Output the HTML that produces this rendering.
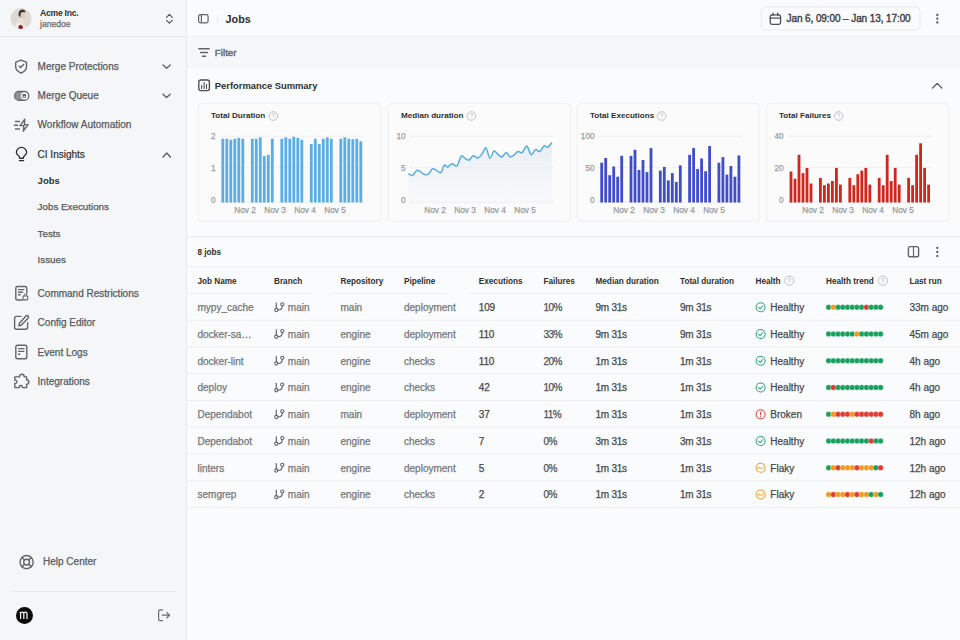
<!DOCTYPE html>
<html><head><meta charset="utf-8"><style>
html,body{margin:0;padding:0;width:960px;height:640px;overflow:hidden;background:#fafbfc;}
body{position:relative;font-family:"Liberation Sans", sans-serif;}
svg{position:absolute;left:0;top:0;}
.t{position:absolute;white-space:nowrap;line-height:1;-webkit-text-stroke:0.25px currentColor;}
</style></head><body>
<svg width="960" height="640" viewBox="0 0 960 640">
<rect x="0" y="0" width="186" height="640" fill="#f5f6f8"/>
<rect x="186" y="0" width="774" height="640" fill="#fafbfc"/>
<rect x="186" y="36" width="774" height="32" fill="#f6f7f9"/>
<line x1="186" y1="36.5" x2="960" y2="36.5" stroke="#f0f1f3" stroke-width="1"/>
<line x1="186" y1="67.5" x2="960" y2="67.5" stroke="#f1f2f4" stroke-width="1"/>
<line x1="186.5" y1="0" x2="186.5" y2="640" stroke="#e7e9ec" stroke-width="1"/>
<line x1="0" y1="36.5" x2="185" y2="36.5" stroke="#e7e9ec" stroke-width="1"/>
<defs><clipPath id="avc"><circle cx="21" cy="18.6" r="10.5"/></clipPath></defs>
<g clip-path="url(#avc)"><rect x="10" y="8" width="22" height="22" fill="#dddad5"/><path d="M16 30 L16.5 24 Q17 20 19.5 18.5 L23 18.8 Q24.5 22 24 30 Z" fill="#ebe0d8"/><path d="M14 30 Q14.5 25 17.5 22 L19.5 24 L18 30 Z" fill="#f1eee9"/><path d="M23.5 30 L23.8 24 L26 26 L26 30 Z" fill="#eeeae5"/><ellipse cx="22.6" cy="15.2" rx="2.5" ry="3.4" fill="#e3c9bb"/><path d="M18.6 15.5 Q18 10.5 21.8 9.6 Q25.6 9.4 25.4 12.6 Q23.5 11.3 21 12.6 Q20.3 14.5 20.4 17.5 Z" fill="#3e302c"/><circle cx="20.6" cy="27.3" r="2.2" fill="#9d1519"/></g>
<path d="M166.5 17.3 L169.4 14.4 L172.3 17.3 M166.5 20.3 L169.4 23.2 L172.3 20.3" fill="none" stroke="#555" stroke-width="1.15" stroke-linecap="round" stroke-linejoin="round"/>
<path d="M21.1 60.1 L26.5 62.2 V66.8 Q26.5 70.8 21.1 73 Q15.7 70.8 15.7 66.8 V62.2 Z" fill="none" stroke="#636569" stroke-width="1.4" stroke-linecap="round" stroke-linejoin="round"/>
<path d="M19.1 66.2 L20.6 67.6 L23.6 64.6" fill="none" stroke="#636569" stroke-width="1.4" stroke-linecap="round" stroke-linejoin="round"/>
<path d="M163 64.9 L166.6 68.3 L170.2 64.9" fill="none" stroke="#636569" stroke-width="1.4" stroke-linecap="round" stroke-linejoin="round"/>
<path d="M163 94.2 L166.6 97.6 L170.2 94.2" fill="none" stroke="#636569" stroke-width="1.4" stroke-linecap="round" stroke-linejoin="round"/>
<path d="M163 157 L166.7 153 L170.4 157" fill="none" stroke="#555" stroke-width="1.2" stroke-linecap="round" stroke-linejoin="round"/>
<rect x="14.5" y="91.4" width="14.4" height="9" rx="4.5" fill="#8e9093" stroke="#636569" stroke-width="1.1"/>
<circle cx="24.4" cy="95.9" r="3.55" fill="#fbfbfc"/>
<rect x="22.5" y="94.1" width="3.4" height="3.6" fill="#5c5e61"/>
<rect x="23.4" y="96" width="1.6" height="1" fill="#d9dadc"/>
<path d="M24.8 119.2 L20 125.6 H23.9 L23.3 131.2 L28.1 124.6 H24.3 L24.8 119.2 Z" fill="none" stroke="#636569" stroke-width="1.4" stroke-linecap="round" stroke-linejoin="round"/>
<path d="M15.6 121.5 H19.4 M14.4 125.3 H17.6 M15.4 129 H19.4" fill="none" stroke="#636569" stroke-width="1.4" stroke-linecap="round" stroke-linejoin="round"/>
<path d="M19.7 158.2 Q19.7 156.8 18.3 155.6 Q16.4 154 16.4 152.5 A5.1 5.1 0 0 1 26.6 152.5 Q26.6 154 24.7 155.6 Q23.3 156.8 23.3 158.2 Z M19.4 160.6 H23.6" fill="none" stroke="#2a2c2f" stroke-width="1.35" stroke-linecap="round" stroke-linejoin="round"/>
<path d="M22.5 300 H17.6 Q15.8 300 15.8 298.2 V288.2 Q15.8 286.5 17.6 286.5 H25 Q26.8 286.5 26.8 288.2 V293.2" fill="none" stroke="#636569" stroke-width="1.4" stroke-linecap="round" stroke-linejoin="round"/>
<path d="M18.5 289.6 H24 M18.5 292.2 H22.6 M18.5 294.8 H20.2" fill="none" stroke="#636569" stroke-width="1.4" stroke-linecap="round" stroke-linejoin="round"/>
<rect x="23" y="296" width="4.8" height="3.9" rx="0.9" fill="#f5f6f8" stroke="#636569" stroke-width="1.1"/>
<path d="M24.1 296 V295.2 A1.3 1.3 0 0 1 26.7 295.2 V296" fill="none" stroke="#636569" stroke-width="1"/>
<path d="M21 316.4 H16.6 Q14.6 316.4 14.6 318.4 V327.3 Q14.6 329.3 16.6 329.3 H25.6 Q27.6 329.3 27.6 327.3 V322.8" fill="none" stroke="#636569" stroke-width="1.4" stroke-linecap="round" stroke-linejoin="round"/>
<path d="M26.2 315.8 Q27.7 315 28.4 316.4 Q28.8 317.6 28 318.3 L21.2 325.2 L18.9 325.7 L19.4 323.3 Z" fill="none" stroke="#636569" stroke-width="1.4" stroke-linecap="round" stroke-linejoin="round"/>
<rect x="15.8" y="345.3" width="11" height="13.4" rx="1.8" fill="none" stroke="#636569" stroke-width="1.4" stroke-linecap="round" stroke-linejoin="round"/>
<path d="M18.6 348.6 H24 M18.6 351.4 H23.8 M18.6 354.2 H19.8" fill="none" stroke="#636569" stroke-width="1.4" stroke-linecap="round" stroke-linejoin="round"/>
<path d="M19.5 376.9 Q19.6 374.2 22 374.3 Q24.3 374.5 24.2 376.9 H26.6 V379.7 Q28.8 379.8 28.8 382 Q28.8 384.2 26.6 384.2 V387.6 H22.4 Q22.6 385.6 20.9 385.5 Q19 385.5 19.2 387.6 H14.8 V383.4 Q16.9 383.5 16.9 381.8 Q16.9 380 14.8 380.1 V376.9 Z" fill="none" stroke="#636569" stroke-width="1.4" stroke-linecap="round" stroke-linejoin="round"/>
<circle cx="26.6" cy="562.1" r="6.6" fill="none" stroke="#636569" stroke-width="1.4" stroke-linecap="round" stroke-linejoin="round"/>
<circle cx="26.6" cy="562.1" r="2.9" fill="none" stroke="#636569" stroke-width="1.4" stroke-linecap="round" stroke-linejoin="round"/>
<path d="M22 557.5 L24.5 560 M31.2 557.5 L28.7 560 M22 566.7 L24.5 564.2 M31.2 566.7 L28.7 564.2" fill="none" stroke="#636569" stroke-width="1.4" stroke-linecap="round" stroke-linejoin="round"/>
<line x1="12" y1="591.5" x2="176" y2="591.5" stroke="#e7e9ec" stroke-width="1"/>
<circle cx="24.5" cy="615.5" r="8.5" fill="#0b0b0b"/>
<path d="M20.6 619 V613.6 Q20.6 612.2 22.2 612.2 Q23.8 612.2 23.8 613.6 V619 M23.8 613.6 Q23.8 612.2 25.4 612.2 Q27 612.2 27 613.6 V619" fill="none" stroke="#fff" stroke-width="1.2"/>
<path d="M19.5 612.3 H20.6" stroke="#fff" stroke-width="1"/>
<path d="M162.5 609.9 H160 Q158.6 609.9 158.6 611.3 V619.3 Q158.6 620.7 160 620.7 H162.5 M162.2 615.2 H169.4 M166.8 612.6 L169.5 615.2 L166.8 617.8" fill="none" stroke="#6a6c70" stroke-width="1.2" stroke-linecap="round" stroke-linejoin="round"/>
<rect x="198.6" y="14.6" width="9.5" height="8.2" rx="1.8" fill="none" stroke="#636569" stroke-width="1.25"/>
<line x1="201.4" y1="14.8" x2="201.4" y2="22.6" stroke="#636569" stroke-width="1.2"/>
<line x1="217.5" y1="15.5" x2="217.5" y2="23.5" stroke="#e6e8eb" stroke-width="1"/>
<rect x="761.5" y="7" width="158.5" height="23" rx="4.5" fill="#fafbfc" stroke="#e7e9ec" stroke-width="1"/>
<rect x="770.2" y="14.9" width="10.4" height="9.4" rx="1.8" fill="none" stroke="#4e5054" stroke-width="1.3"/>
<path d="M770.2 18.1 H780.6 M773 13.2 V15.6 M777.8 13.2 V15.6" fill="none" stroke="#4e5054" stroke-width="1.3" stroke-linecap="round"/>
<circle cx="937.3" cy="14.9" r="1.15" fill="#555"/>
<circle cx="937.3" cy="18.7" r="1.15" fill="#555"/>
<circle cx="937.3" cy="22.5" r="1.15" fill="#555"/>
<path d="M198.8 48.8 H209.2 M200.6 52.5 H207.4 M202.4 56.2 H205.6" fill="none" stroke="#636569" stroke-width="1.4" stroke-linecap="round" stroke-linejoin="round"/>
<rect x="198.8" y="80" width="10.6" height="10.6" rx="2" fill="none" stroke="#4a4c50" stroke-width="1.35"/>
<path d="M201.7 88.4 V85.4 M204.1 88.4 V82.6 M206.5 88.4 V84.4" fill="none" stroke="#4a4c50" stroke-width="1.1" stroke-linecap="round"/>
<path d="M932.6 88 L937.2 83.4 L941.8 88" fill="none" stroke="#555" stroke-width="1.2" stroke-linecap="round" stroke-linejoin="round"/>
<line x1="186" y1="236.6" x2="960" y2="236.6" stroke="#e7e9ec" stroke-width="1"/>
<rect x="198.2" y="103.4" width="182.6" height="117.9" rx="4" fill="#fbfbfc" stroke="#eef0f2" stroke-width="1"/>
<rect x="388.2" y="103.4" width="182.6" height="117.9" rx="4" fill="#fbfbfc" stroke="#eef0f2" stroke-width="1"/>
<rect x="577.2" y="103.4" width="182.6" height="117.9" rx="4" fill="#fbfbfc" stroke="#eef0f2" stroke-width="1"/>
<rect x="766.2" y="103.4" width="182.6" height="117.9" rx="4" fill="#fbfbfc" stroke="#eef0f2" stroke-width="1"/>
<circle cx="273.3" cy="116" r="4.3" fill="none" stroke="#b8bbbf" stroke-width="0.9"/>
<path d="M272.0 114.9 Q272.0 113.5 273.3 113.5 Q274.7 113.5 274.7 114.8 Q274.7 115.7 273.3 116.3 V116.9" fill="none" stroke="#b8bbbf" stroke-width="0.8"/>
<circle cx="273.3" cy="118.1" r="0.45" fill="#b8bbbf"/>
<circle cx="471.5" cy="116" r="4.3" fill="none" stroke="#b8bbbf" stroke-width="0.9"/>
<path d="M470.2 114.9 Q470.2 113.5 471.5 113.5 Q472.9 113.5 472.9 114.8 Q472.9 115.7 471.5 116.3 V116.9" fill="none" stroke="#b8bbbf" stroke-width="0.8"/>
<circle cx="471.5" cy="118.1" r="0.45" fill="#b8bbbf"/>
<circle cx="661.6" cy="116" r="4.3" fill="none" stroke="#b8bbbf" stroke-width="0.9"/>
<path d="M660.3000000000001 114.9 Q660.3000000000001 113.5 661.6 113.5 Q663.0 113.5 663.0 114.8 Q663.0 115.7 661.6 116.3 V116.9" fill="none" stroke="#b8bbbf" stroke-width="0.8"/>
<circle cx="661.6" cy="118.1" r="0.45" fill="#b8bbbf"/>
<circle cx="838.6" cy="116" r="4.3" fill="none" stroke="#b8bbbf" stroke-width="0.9"/>
<path d="M837.3000000000001 114.9 Q837.3000000000001 113.5 838.6 113.5 Q840.0 113.5 840.0 114.8 Q840.0 115.7 838.6 116.3 V116.9" fill="none" stroke="#b8bbbf" stroke-width="0.8"/>
<circle cx="838.6" cy="118.1" r="0.45" fill="#b8bbbf"/>
<line x1="219" y1="136.3" x2="364" y2="136.3" stroke="#eef0f2" stroke-width="1"/>
<line x1="219" y1="167.6" x2="364" y2="167.6" stroke="#eef0f2" stroke-width="1"/>
<line x1="219" y1="202.3" x2="364" y2="202.3" stroke="#eef0f2" stroke-width="1"/>
<line x1="409" y1="136.3" x2="554" y2="136.3" stroke="#eef0f2" stroke-width="1"/>
<line x1="409" y1="167.6" x2="554" y2="167.6" stroke="#eef0f2" stroke-width="1"/>
<line x1="409" y1="202.3" x2="554" y2="202.3" stroke="#eef0f2" stroke-width="1"/>
<line x1="598" y1="136.3" x2="743" y2="136.3" stroke="#eef0f2" stroke-width="1"/>
<line x1="598" y1="167.6" x2="743" y2="167.6" stroke="#eef0f2" stroke-width="1"/>
<line x1="598" y1="202.3" x2="743" y2="202.3" stroke="#eef0f2" stroke-width="1"/>
<line x1="787" y1="136.3" x2="932" y2="136.3" stroke="#eef0f2" stroke-width="1"/>
<line x1="787" y1="167.6" x2="932" y2="167.6" stroke="#eef0f2" stroke-width="1"/>
<line x1="787" y1="202.3" x2="932" y2="202.3" stroke="#eef0f2" stroke-width="1"/>
<rect x="221.40" y="138.75" width="2.8" height="63.75" fill="#5aaee6"/>
<rect x="225.40" y="138.75" width="2.8" height="63.75" fill="#5aaee6"/>
<rect x="229.40" y="139.80" width="2.8" height="62.70" fill="#5aaee6"/>
<rect x="233.40" y="138.75" width="2.8" height="63.75" fill="#5aaee6"/>
<rect x="237.40" y="137.90" width="2.8" height="64.60" fill="#5aaee6"/>
<rect x="241.40" y="138.75" width="2.8" height="63.75" fill="#5aaee6"/>
<rect x="250.90" y="138.75" width="2.8" height="63.75" fill="#5aaee6"/>
<rect x="254.90" y="138.75" width="2.8" height="63.75" fill="#5aaee6"/>
<rect x="258.90" y="137.30" width="2.8" height="65.20" fill="#5aaee6"/>
<rect x="262.90" y="156.00" width="2.8" height="46.50" fill="#5aaee6"/>
<rect x="266.90" y="154.80" width="2.8" height="47.70" fill="#5aaee6"/>
<rect x="270.90" y="138.75" width="2.8" height="63.75" fill="#5aaee6"/>
<rect x="280.40" y="138.75" width="2.8" height="63.75" fill="#5aaee6"/>
<rect x="284.40" y="137.30" width="2.8" height="65.20" fill="#5aaee6"/>
<rect x="288.40" y="138.75" width="2.8" height="63.75" fill="#5aaee6"/>
<rect x="292.40" y="136.70" width="2.8" height="65.80" fill="#5aaee6"/>
<rect x="296.40" y="137.90" width="2.8" height="64.60" fill="#5aaee6"/>
<rect x="300.40" y="139.80" width="2.8" height="62.70" fill="#5aaee6"/>
<rect x="309.90" y="144.00" width="2.8" height="58.50" fill="#5aaee6"/>
<rect x="313.90" y="138.75" width="2.8" height="63.75" fill="#5aaee6"/>
<rect x="317.90" y="144.00" width="2.8" height="58.50" fill="#5aaee6"/>
<rect x="321.90" y="138.75" width="2.8" height="63.75" fill="#5aaee6"/>
<rect x="325.90" y="137.30" width="2.8" height="65.20" fill="#5aaee6"/>
<rect x="329.90" y="138.75" width="2.8" height="63.75" fill="#5aaee6"/>
<rect x="339.40" y="138.75" width="2.8" height="63.75" fill="#5aaee6"/>
<rect x="343.40" y="137.30" width="2.8" height="65.20" fill="#5aaee6"/>
<rect x="347.40" y="138.75" width="2.8" height="63.75" fill="#5aaee6"/>
<rect x="351.40" y="139.20" width="2.8" height="63.30" fill="#5aaee6"/>
<rect x="355.40" y="138.75" width="2.8" height="63.75" fill="#5aaee6"/>
<rect x="359.40" y="141.25" width="2.8" height="61.25" fill="#5aaee6"/>
<rect x="600.30" y="162.70" width="2.8" height="39.80" fill="#3f4ec6"/>
<rect x="604.30" y="157.90" width="2.8" height="44.60" fill="#3f4ec6"/>
<rect x="608.30" y="175.20" width="2.8" height="27.30" fill="#3f4ec6"/>
<rect x="612.30" y="166.50" width="2.8" height="36.00" fill="#3f4ec6"/>
<rect x="616.30" y="176.70" width="2.8" height="25.80" fill="#3f4ec6"/>
<rect x="620.30" y="155.80" width="2.8" height="46.70" fill="#3f4ec6"/>
<rect x="629.60" y="155.80" width="2.8" height="46.70" fill="#3f4ec6"/>
<rect x="633.60" y="149.80" width="2.8" height="52.70" fill="#3f4ec6"/>
<rect x="637.60" y="170.00" width="2.8" height="32.50" fill="#3f4ec6"/>
<rect x="641.60" y="160.00" width="2.8" height="42.50" fill="#3f4ec6"/>
<rect x="645.60" y="172.10" width="2.8" height="30.40" fill="#3f4ec6"/>
<rect x="649.60" y="148.10" width="2.8" height="54.40" fill="#3f4ec6"/>
<rect x="658.90" y="170.60" width="2.8" height="31.90" fill="#3f4ec6"/>
<rect x="662.90" y="166.90" width="2.8" height="35.60" fill="#3f4ec6"/>
<rect x="666.90" y="180.40" width="2.8" height="22.10" fill="#3f4ec6"/>
<rect x="670.90" y="173.10" width="2.8" height="29.40" fill="#3f4ec6"/>
<rect x="674.90" y="181.90" width="2.8" height="20.60" fill="#3f4ec6"/>
<rect x="678.90" y="165.40" width="2.8" height="37.10" fill="#3f4ec6"/>
<rect x="688.20" y="154.80" width="2.8" height="47.70" fill="#3f4ec6"/>
<rect x="692.20" y="148.10" width="2.8" height="54.40" fill="#3f4ec6"/>
<rect x="696.20" y="169.00" width="2.8" height="33.50" fill="#3f4ec6"/>
<rect x="700.20" y="158.50" width="2.8" height="44.00" fill="#3f4ec6"/>
<rect x="704.20" y="171.25" width="2.8" height="31.25" fill="#3f4ec6"/>
<rect x="708.20" y="146.00" width="2.8" height="56.50" fill="#3f4ec6"/>
<rect x="717.50" y="162.70" width="2.8" height="39.80" fill="#3f4ec6"/>
<rect x="721.50" y="157.10" width="2.8" height="45.40" fill="#3f4ec6"/>
<rect x="725.50" y="174.60" width="2.8" height="27.90" fill="#3f4ec6"/>
<rect x="729.50" y="166.00" width="2.8" height="36.50" fill="#3f4ec6"/>
<rect x="733.50" y="176.70" width="2.8" height="25.80" fill="#3f4ec6"/>
<rect x="737.50" y="155.40" width="2.8" height="47.10" fill="#3f4ec6"/>
<rect x="789.60" y="171.50" width="2.8" height="31.00" fill="#d1261c"/>
<rect x="793.60" y="178.75" width="2.8" height="23.75" fill="#d1261c"/>
<rect x="797.60" y="154.80" width="2.8" height="47.70" fill="#d1261c"/>
<rect x="801.60" y="173.10" width="2.8" height="29.40" fill="#d1261c"/>
<rect x="805.60" y="167.90" width="2.8" height="34.60" fill="#d1261c"/>
<rect x="809.60" y="183.50" width="2.8" height="19.00" fill="#d1261c"/>
<rect x="819.00" y="177.90" width="2.8" height="24.60" fill="#d1261c"/>
<rect x="823.00" y="185.20" width="2.8" height="17.30" fill="#d1261c"/>
<rect x="827.00" y="183.50" width="2.8" height="19.00" fill="#d1261c"/>
<rect x="831.00" y="181.00" width="2.8" height="21.50" fill="#d1261c"/>
<rect x="835.00" y="167.90" width="2.8" height="34.60" fill="#d1261c"/>
<rect x="839.00" y="184.60" width="2.8" height="17.90" fill="#d1261c"/>
<rect x="848.40" y="177.90" width="2.8" height="24.60" fill="#d1261c"/>
<rect x="852.40" y="185.20" width="2.8" height="17.30" fill="#d1261c"/>
<rect x="856.40" y="174.20" width="2.8" height="28.30" fill="#d1261c"/>
<rect x="860.40" y="170.60" width="2.8" height="31.90" fill="#d1261c"/>
<rect x="864.40" y="167.90" width="2.8" height="34.60" fill="#d1261c"/>
<rect x="868.40" y="184.60" width="2.8" height="17.90" fill="#d1261c"/>
<rect x="877.80" y="177.90" width="2.8" height="24.60" fill="#d1261c"/>
<rect x="881.80" y="185.20" width="2.8" height="17.30" fill="#d1261c"/>
<rect x="885.80" y="154.80" width="2.8" height="47.70" fill="#d1261c"/>
<rect x="889.80" y="181.00" width="2.8" height="21.50" fill="#d1261c"/>
<rect x="893.80" y="167.90" width="2.8" height="34.60" fill="#d1261c"/>
<rect x="897.80" y="184.60" width="2.8" height="17.90" fill="#d1261c"/>
<rect x="907.20" y="177.90" width="2.8" height="24.60" fill="#d1261c"/>
<rect x="911.20" y="185.20" width="2.8" height="17.30" fill="#d1261c"/>
<rect x="915.20" y="154.80" width="2.8" height="47.70" fill="#d1261c"/>
<rect x="919.20" y="143.30" width="2.8" height="59.20" fill="#d1261c"/>
<rect x="923.20" y="167.90" width="2.8" height="34.60" fill="#d1261c"/>
<rect x="927.20" y="184.60" width="2.8" height="17.90" fill="#d1261c"/>
<defs><linearGradient id="ag" x1="0" y1="0" x2="0" y2="1"><stop offset="0" stop-color="#e2e9f2" stop-opacity="0.75"/><stop offset="1" stop-color="#f1f4f8" stop-opacity="0.35"/></linearGradient></defs>
<path d="M408.4 173.6 C409.10 173.90 411.20 175.93 412.6 175.4 C414.00 174.87 415.40 170.93 416.8 170.4 C418.20 169.87 419.70 171.50 421 172.2 C422.30 172.90 423.30 174.37 424.6 174.6 C425.90 174.83 427.52 174.55 428.8 173.6 C430.08 172.65 431.02 169.43 432.3 168.9 C433.58 168.37 435.08 169.78 436.5 170.4 C437.92 171.02 439.50 173.48 440.8 172.6 C442.10 171.72 443.13 166.03 444.3 165.1 C445.47 164.17 446.52 167.23 447.8 167 C449.08 166.77 450.47 163.90 452 163.7 C453.53 163.50 455.47 167.08 457 165.8 C458.53 164.52 459.92 157.28 461.2 156 C462.48 154.72 463.40 157.40 464.7 158.1 C466.00 158.80 467.58 160.60 469 160.2 C470.42 159.80 471.73 156.05 473.2 155.7 C474.67 155.35 476.33 158.40 477.8 158.1 C479.27 157.80 480.63 155.62 482 153.9 C483.37 152.18 484.70 147.10 486 147.8 C487.30 148.50 488.47 157.57 489.8 158.1 C491.13 158.63 492.72 151.70 494 151 C495.28 150.30 496.20 152.88 497.5 153.9 C498.80 154.92 500.33 157.33 501.8 157.1 C503.27 156.87 504.90 152.50 506.3 152.5 C507.70 152.50 508.85 156.75 510.2 157.1 C511.55 157.45 513.10 155.53 514.4 154.6 C515.70 153.67 516.70 151.85 518 151.5 C519.30 151.15 520.73 153.40 522.2 152.5 C523.67 151.60 525.33 145.75 526.8 146.1 C528.27 146.45 529.53 154.02 531 154.6 C532.47 155.18 534.13 150.12 535.6 149.6 C537.07 149.08 538.40 152.13 539.8 151.5 C541.20 150.87 542.72 146.50 544 145.8 C545.28 145.10 546.20 147.83 547.5 147.3 C548.80 146.77 551.08 143.38 551.8 142.6 L551.8 202.3 L408.4 202.3 Z" fill="url(#ag)"/>
<path d="M408.4 173.6 C409.10 173.90 411.20 175.93 412.6 175.4 C414.00 174.87 415.40 170.93 416.8 170.4 C418.20 169.87 419.70 171.50 421 172.2 C422.30 172.90 423.30 174.37 424.6 174.6 C425.90 174.83 427.52 174.55 428.8 173.6 C430.08 172.65 431.02 169.43 432.3 168.9 C433.58 168.37 435.08 169.78 436.5 170.4 C437.92 171.02 439.50 173.48 440.8 172.6 C442.10 171.72 443.13 166.03 444.3 165.1 C445.47 164.17 446.52 167.23 447.8 167 C449.08 166.77 450.47 163.90 452 163.7 C453.53 163.50 455.47 167.08 457 165.8 C458.53 164.52 459.92 157.28 461.2 156 C462.48 154.72 463.40 157.40 464.7 158.1 C466.00 158.80 467.58 160.60 469 160.2 C470.42 159.80 471.73 156.05 473.2 155.7 C474.67 155.35 476.33 158.40 477.8 158.1 C479.27 157.80 480.63 155.62 482 153.9 C483.37 152.18 484.70 147.10 486 147.8 C487.30 148.50 488.47 157.57 489.8 158.1 C491.13 158.63 492.72 151.70 494 151 C495.28 150.30 496.20 152.88 497.5 153.9 C498.80 154.92 500.33 157.33 501.8 157.1 C503.27 156.87 504.90 152.50 506.3 152.5 C507.70 152.50 508.85 156.75 510.2 157.1 C511.55 157.45 513.10 155.53 514.4 154.6 C515.70 153.67 516.70 151.85 518 151.5 C519.30 151.15 520.73 153.40 522.2 152.5 C523.67 151.60 525.33 145.75 526.8 146.1 C528.27 146.45 529.53 154.02 531 154.6 C532.47 155.18 534.13 150.12 535.6 149.6 C537.07 149.08 538.40 152.13 539.8 151.5 C541.20 150.87 542.72 146.50 544 145.8 C545.28 145.10 546.20 147.83 547.5 147.3 C548.80 146.77 551.08 143.38 551.8 142.6" fill="none" stroke="#55ade2" stroke-width="1.5"/>
<line x1="186" y1="266.5" x2="960" y2="266.5" stroke="#eef0f2" stroke-width="1"/>
<rect x="908.4" y="246.6" width="10.2" height="10.2" rx="1.8" fill="none" stroke="#636569" stroke-width="1.4" stroke-linecap="round" stroke-linejoin="round"/>
<line x1="913.5" y1="246.8" x2="913.5" y2="256.6" stroke="#636569" stroke-width="1.2"/>
<circle cx="937.3" cy="247.9" r="1.15" fill="#555"/>
<circle cx="937.3" cy="252" r="1.15" fill="#555"/>
<circle cx="937.3" cy="256.1" r="1.15" fill="#555"/>
<circle cx="789.3" cy="280.6" r="4.6" fill="none" stroke="#b8bbbf" stroke-width="0.9"/>
<path d="M788.0 279.5 Q788.0 278.1 789.3 278.1 Q790.6999999999999 278.1 790.6999999999999 279.40000000000003 Q790.6999999999999 280.3 789.3 280.90000000000003 V281.5" fill="none" stroke="#b8bbbf" stroke-width="0.8"/>
<circle cx="789.3" cy="282.70000000000005" r="0.45" fill="#b8bbbf"/>
<circle cx="882.9" cy="280.6" r="4.6" fill="none" stroke="#b8bbbf" stroke-width="0.9"/>
<path d="M881.6 279.5 Q881.6 278.1 882.9 278.1 Q884.3 278.1 884.3 279.40000000000003 Q884.3 280.3 882.9 280.90000000000003 V281.5" fill="none" stroke="#b8bbbf" stroke-width="0.8"/>
<circle cx="882.9" cy="282.70000000000005" r="0.45" fill="#b8bbbf"/>
<line x1="186" y1="293.5" x2="312.5" y2="293.5" stroke="#eceef1" stroke-width="1"/>
<line x1="331.3" y1="293.5" x2="447" y2="293.5" stroke="#eceef1" stroke-width="1"/>
<line x1="467.7" y1="293.5" x2="960" y2="293.5" stroke="#eceef1" stroke-width="1"/>
<path d="M276.3 303.0 V308.40000000000003" fill="none" stroke="#636569" stroke-width="1.2" stroke-linecap="round"/>
<circle cx="276.3" cy="310.0" r="1.6" fill="none" stroke="#636569" stroke-width="1.1"/>
<circle cx="282.3" cy="304.3" r="1.6" fill="none" stroke="#636569" stroke-width="1.1"/>
<path d="M282.3 305.90000000000003 Q282.3 309.90000000000003 277.90000000000003 309.90000000000003" fill="none" stroke="#636569" stroke-width="1.1"/>
<circle cx="760.6" cy="307.3" r="4.5" fill="none" stroke="#3aa57a" stroke-width="1.1"/>
<path d="M758.6 307.40000000000003 L760.1 308.8 L762.7 306.0" fill="none" stroke="#3aa57a" stroke-width="1.1" stroke-linecap="round" stroke-linejoin="round"/>
<circle cx="828.60" cy="307.30" r="2.75" fill="#17a05d" stroke="#fafbfc" stroke-width="0.3"/>
<circle cx="833.33" cy="307.30" r="2.75" fill="#f29a1f" stroke="#fafbfc" stroke-width="0.3"/>
<circle cx="838.06" cy="307.30" r="2.75" fill="#17a05d" stroke="#fafbfc" stroke-width="0.3"/>
<circle cx="842.79" cy="307.30" r="2.75" fill="#17a05d" stroke="#fafbfc" stroke-width="0.3"/>
<circle cx="847.52" cy="307.30" r="2.75" fill="#17a05d" stroke="#fafbfc" stroke-width="0.3"/>
<circle cx="852.25" cy="307.30" r="2.75" fill="#17a05d" stroke="#fafbfc" stroke-width="0.3"/>
<circle cx="856.98" cy="307.30" r="2.75" fill="#17a05d" stroke="#fafbfc" stroke-width="0.3"/>
<circle cx="861.71" cy="307.30" r="2.75" fill="#17a05d" stroke="#fafbfc" stroke-width="0.3"/>
<circle cx="866.44" cy="307.30" r="2.75" fill="#df3b32" stroke="#fafbfc" stroke-width="0.3"/>
<circle cx="871.17" cy="307.30" r="2.75" fill="#17a05d" stroke="#fafbfc" stroke-width="0.3"/>
<circle cx="875.90" cy="307.30" r="2.75" fill="#17a05d" stroke="#fafbfc" stroke-width="0.3"/>
<circle cx="880.63" cy="307.30" r="2.75" fill="#17a05d" stroke="#fafbfc" stroke-width="0.3"/>
<line x1="186" y1="320.25" x2="960" y2="320.25" stroke="#eceef1" stroke-width="1"/>
<path d="M276.3 329.75 V335.15000000000003" fill="none" stroke="#636569" stroke-width="1.2" stroke-linecap="round"/>
<circle cx="276.3" cy="336.75" r="1.6" fill="none" stroke="#636569" stroke-width="1.1"/>
<circle cx="282.3" cy="331.05" r="1.6" fill="none" stroke="#636569" stroke-width="1.1"/>
<path d="M282.3 332.65000000000003 Q282.3 336.65000000000003 277.90000000000003 336.65000000000003" fill="none" stroke="#636569" stroke-width="1.1"/>
<circle cx="760.6" cy="334.05" r="4.5" fill="none" stroke="#3aa57a" stroke-width="1.1"/>
<path d="M758.6 334.15000000000003 L760.1 335.55 L762.7 332.75" fill="none" stroke="#3aa57a" stroke-width="1.1" stroke-linecap="round" stroke-linejoin="round"/>
<circle cx="828.60" cy="334.05" r="2.75" fill="#17a05d" stroke="#fafbfc" stroke-width="0.3"/>
<circle cx="833.33" cy="334.05" r="2.75" fill="#17a05d" stroke="#fafbfc" stroke-width="0.3"/>
<circle cx="838.06" cy="334.05" r="2.75" fill="#17a05d" stroke="#fafbfc" stroke-width="0.3"/>
<circle cx="842.79" cy="334.05" r="2.75" fill="#17a05d" stroke="#fafbfc" stroke-width="0.3"/>
<circle cx="847.52" cy="334.05" r="2.75" fill="#17a05d" stroke="#fafbfc" stroke-width="0.3"/>
<circle cx="852.25" cy="334.05" r="2.75" fill="#17a05d" stroke="#fafbfc" stroke-width="0.3"/>
<circle cx="856.98" cy="334.05" r="2.75" fill="#f29a1f" stroke="#fafbfc" stroke-width="0.3"/>
<circle cx="861.71" cy="334.05" r="2.75" fill="#17a05d" stroke="#fafbfc" stroke-width="0.3"/>
<circle cx="866.44" cy="334.05" r="2.75" fill="#17a05d" stroke="#fafbfc" stroke-width="0.3"/>
<circle cx="871.17" cy="334.05" r="2.75" fill="#17a05d" stroke="#fafbfc" stroke-width="0.3"/>
<circle cx="875.90" cy="334.05" r="2.75" fill="#17a05d" stroke="#fafbfc" stroke-width="0.3"/>
<circle cx="880.63" cy="334.05" r="2.75" fill="#17a05d" stroke="#fafbfc" stroke-width="0.3"/>
<line x1="186" y1="347.00" x2="960" y2="347.00" stroke="#eceef1" stroke-width="1"/>
<path d="M276.3 356.5 V361.90000000000003" fill="none" stroke="#636569" stroke-width="1.2" stroke-linecap="round"/>
<circle cx="276.3" cy="363.5" r="1.6" fill="none" stroke="#636569" stroke-width="1.1"/>
<circle cx="282.3" cy="357.8" r="1.6" fill="none" stroke="#636569" stroke-width="1.1"/>
<path d="M282.3 359.40000000000003 Q282.3 363.40000000000003 277.90000000000003 363.40000000000003" fill="none" stroke="#636569" stroke-width="1.1"/>
<circle cx="760.6" cy="360.8" r="4.5" fill="none" stroke="#3aa57a" stroke-width="1.1"/>
<path d="M758.6 360.90000000000003 L760.1 362.3 L762.7 359.5" fill="none" stroke="#3aa57a" stroke-width="1.1" stroke-linecap="round" stroke-linejoin="round"/>
<circle cx="828.60" cy="360.80" r="2.75" fill="#17a05d" stroke="#fafbfc" stroke-width="0.3"/>
<circle cx="833.33" cy="360.80" r="2.75" fill="#17a05d" stroke="#fafbfc" stroke-width="0.3"/>
<circle cx="838.06" cy="360.80" r="2.75" fill="#17a05d" stroke="#fafbfc" stroke-width="0.3"/>
<circle cx="842.79" cy="360.80" r="2.75" fill="#17a05d" stroke="#fafbfc" stroke-width="0.3"/>
<circle cx="847.52" cy="360.80" r="2.75" fill="#17a05d" stroke="#fafbfc" stroke-width="0.3"/>
<circle cx="852.25" cy="360.80" r="2.75" fill="#17a05d" stroke="#fafbfc" stroke-width="0.3"/>
<circle cx="856.98" cy="360.80" r="2.75" fill="#17a05d" stroke="#fafbfc" stroke-width="0.3"/>
<circle cx="861.71" cy="360.80" r="2.75" fill="#17a05d" stroke="#fafbfc" stroke-width="0.3"/>
<circle cx="866.44" cy="360.80" r="2.75" fill="#17a05d" stroke="#fafbfc" stroke-width="0.3"/>
<circle cx="871.17" cy="360.80" r="2.75" fill="#17a05d" stroke="#fafbfc" stroke-width="0.3"/>
<circle cx="875.90" cy="360.80" r="2.75" fill="#17a05d" stroke="#fafbfc" stroke-width="0.3"/>
<circle cx="880.63" cy="360.80" r="2.75" fill="#17a05d" stroke="#fafbfc" stroke-width="0.3"/>
<line x1="186" y1="373.75" x2="960" y2="373.75" stroke="#eceef1" stroke-width="1"/>
<path d="M276.3 383.25 V388.65000000000003" fill="none" stroke="#636569" stroke-width="1.2" stroke-linecap="round"/>
<circle cx="276.3" cy="390.25" r="1.6" fill="none" stroke="#636569" stroke-width="1.1"/>
<circle cx="282.3" cy="384.55" r="1.6" fill="none" stroke="#636569" stroke-width="1.1"/>
<path d="M282.3 386.15000000000003 Q282.3 390.15000000000003 277.90000000000003 390.15000000000003" fill="none" stroke="#636569" stroke-width="1.1"/>
<circle cx="760.6" cy="387.55" r="4.5" fill="none" stroke="#3aa57a" stroke-width="1.1"/>
<path d="M758.6 387.65000000000003 L760.1 389.05 L762.7 386.25" fill="none" stroke="#3aa57a" stroke-width="1.1" stroke-linecap="round" stroke-linejoin="round"/>
<circle cx="828.60" cy="387.55" r="2.75" fill="#17a05d" stroke="#fafbfc" stroke-width="0.3"/>
<circle cx="833.33" cy="387.55" r="2.75" fill="#df3b32" stroke="#fafbfc" stroke-width="0.3"/>
<circle cx="838.06" cy="387.55" r="2.75" fill="#17a05d" stroke="#fafbfc" stroke-width="0.3"/>
<circle cx="842.79" cy="387.55" r="2.75" fill="#17a05d" stroke="#fafbfc" stroke-width="0.3"/>
<circle cx="847.52" cy="387.55" r="2.75" fill="#17a05d" stroke="#fafbfc" stroke-width="0.3"/>
<circle cx="852.25" cy="387.55" r="2.75" fill="#17a05d" stroke="#fafbfc" stroke-width="0.3"/>
<circle cx="856.98" cy="387.55" r="2.75" fill="#17a05d" stroke="#fafbfc" stroke-width="0.3"/>
<circle cx="861.71" cy="387.55" r="2.75" fill="#17a05d" stroke="#fafbfc" stroke-width="0.3"/>
<circle cx="866.44" cy="387.55" r="2.75" fill="#17a05d" stroke="#fafbfc" stroke-width="0.3"/>
<circle cx="871.17" cy="387.55" r="2.75" fill="#17a05d" stroke="#fafbfc" stroke-width="0.3"/>
<circle cx="875.90" cy="387.55" r="2.75" fill="#17a05d" stroke="#fafbfc" stroke-width="0.3"/>
<circle cx="880.63" cy="387.55" r="2.75" fill="#17a05d" stroke="#fafbfc" stroke-width="0.3"/>
<line x1="186" y1="400.50" x2="960" y2="400.50" stroke="#eceef1" stroke-width="1"/>
<path d="M276.3 410.0 V415.40000000000003" fill="none" stroke="#636569" stroke-width="1.2" stroke-linecap="round"/>
<circle cx="276.3" cy="417.0" r="1.6" fill="none" stroke="#636569" stroke-width="1.1"/>
<circle cx="282.3" cy="411.3" r="1.6" fill="none" stroke="#636569" stroke-width="1.1"/>
<path d="M282.3 412.90000000000003 Q282.3 416.90000000000003 277.90000000000003 416.90000000000003" fill="none" stroke="#636569" stroke-width="1.1"/>
<circle cx="760.6" cy="414.3" r="4.5" fill="none" stroke="#dc4a47" stroke-width="1.1"/>
<path d="M760.6 412.0 V414.7" stroke="#dc4a47" stroke-width="1.1" stroke-linecap="round"/>
<circle cx="760.6" cy="416.3" r="0.6" fill="#dc4a47"/>
<circle cx="828.60" cy="414.30" r="2.75" fill="#17a05d" stroke="#fafbfc" stroke-width="0.3"/>
<circle cx="833.33" cy="414.30" r="2.75" fill="#f29a1f" stroke="#fafbfc" stroke-width="0.3"/>
<circle cx="838.06" cy="414.30" r="2.75" fill="#df3b32" stroke="#fafbfc" stroke-width="0.3"/>
<circle cx="842.79" cy="414.30" r="2.75" fill="#df3b32" stroke="#fafbfc" stroke-width="0.3"/>
<circle cx="847.52" cy="414.30" r="2.75" fill="#df3b32" stroke="#fafbfc" stroke-width="0.3"/>
<circle cx="852.25" cy="414.30" r="2.75" fill="#f29a1f" stroke="#fafbfc" stroke-width="0.3"/>
<circle cx="856.98" cy="414.30" r="2.75" fill="#df3b32" stroke="#fafbfc" stroke-width="0.3"/>
<circle cx="861.71" cy="414.30" r="2.75" fill="#df3b32" stroke="#fafbfc" stroke-width="0.3"/>
<circle cx="866.44" cy="414.30" r="2.75" fill="#df3b32" stroke="#fafbfc" stroke-width="0.3"/>
<circle cx="871.17" cy="414.30" r="2.75" fill="#df3b32" stroke="#fafbfc" stroke-width="0.3"/>
<circle cx="875.90" cy="414.30" r="2.75" fill="#df3b32" stroke="#fafbfc" stroke-width="0.3"/>
<circle cx="880.63" cy="414.30" r="2.75" fill="#df3b32" stroke="#fafbfc" stroke-width="0.3"/>
<line x1="186" y1="427.25" x2="960" y2="427.25" stroke="#eceef1" stroke-width="1"/>
<path d="M276.3 436.75 V442.15000000000003" fill="none" stroke="#636569" stroke-width="1.2" stroke-linecap="round"/>
<circle cx="276.3" cy="443.75" r="1.6" fill="none" stroke="#636569" stroke-width="1.1"/>
<circle cx="282.3" cy="438.05" r="1.6" fill="none" stroke="#636569" stroke-width="1.1"/>
<path d="M282.3 439.65000000000003 Q282.3 443.65000000000003 277.90000000000003 443.65000000000003" fill="none" stroke="#636569" stroke-width="1.1"/>
<circle cx="760.6" cy="441.05" r="4.5" fill="none" stroke="#3aa57a" stroke-width="1.1"/>
<path d="M758.6 441.15000000000003 L760.1 442.55 L762.7 439.75" fill="none" stroke="#3aa57a" stroke-width="1.1" stroke-linecap="round" stroke-linejoin="round"/>
<circle cx="828.60" cy="441.05" r="2.75" fill="#17a05d" stroke="#fafbfc" stroke-width="0.3"/>
<circle cx="833.33" cy="441.05" r="2.75" fill="#17a05d" stroke="#fafbfc" stroke-width="0.3"/>
<circle cx="838.06" cy="441.05" r="2.75" fill="#17a05d" stroke="#fafbfc" stroke-width="0.3"/>
<circle cx="842.79" cy="441.05" r="2.75" fill="#17a05d" stroke="#fafbfc" stroke-width="0.3"/>
<circle cx="847.52" cy="441.05" r="2.75" fill="#17a05d" stroke="#fafbfc" stroke-width="0.3"/>
<circle cx="852.25" cy="441.05" r="2.75" fill="#17a05d" stroke="#fafbfc" stroke-width="0.3"/>
<circle cx="856.98" cy="441.05" r="2.75" fill="#17a05d" stroke="#fafbfc" stroke-width="0.3"/>
<circle cx="861.71" cy="441.05" r="2.75" fill="#17a05d" stroke="#fafbfc" stroke-width="0.3"/>
<circle cx="866.44" cy="441.05" r="2.75" fill="#17a05d" stroke="#fafbfc" stroke-width="0.3"/>
<circle cx="871.17" cy="441.05" r="2.75" fill="#df3b32" stroke="#fafbfc" stroke-width="0.3"/>
<circle cx="875.90" cy="441.05" r="2.75" fill="#17a05d" stroke="#fafbfc" stroke-width="0.3"/>
<circle cx="880.63" cy="441.05" r="2.75" fill="#17a05d" stroke="#fafbfc" stroke-width="0.3"/>
<line x1="186" y1="454.00" x2="960" y2="454.00" stroke="#eceef1" stroke-width="1"/>
<path d="M276.3 463.5 V468.90000000000003" fill="none" stroke="#636569" stroke-width="1.2" stroke-linecap="round"/>
<circle cx="276.3" cy="470.5" r="1.6" fill="none" stroke="#636569" stroke-width="1.1"/>
<circle cx="282.3" cy="464.8" r="1.6" fill="none" stroke="#636569" stroke-width="1.1"/>
<path d="M282.3 466.40000000000003 Q282.3 470.40000000000003 277.90000000000003 470.40000000000003" fill="none" stroke="#636569" stroke-width="1.1"/>
<circle cx="760.6" cy="467.8" r="4.5" fill="none" stroke="#eba03a" stroke-width="1.1"/>
<path d="M758.0 468.6 Q759.0 465.6 760.2 468.0 Q761.4 470.2 763.2 466.8" fill="none" stroke="#eba03a" stroke-width="1" stroke-linecap="round"/>
<circle cx="828.60" cy="467.80" r="2.75" fill="#17a05d" stroke="#fafbfc" stroke-width="0.3"/>
<circle cx="833.33" cy="467.80" r="2.75" fill="#f29a1f" stroke="#fafbfc" stroke-width="0.3"/>
<circle cx="838.06" cy="467.80" r="2.75" fill="#df3b32" stroke="#fafbfc" stroke-width="0.3"/>
<circle cx="842.79" cy="467.80" r="2.75" fill="#f29a1f" stroke="#fafbfc" stroke-width="0.3"/>
<circle cx="847.52" cy="467.80" r="2.75" fill="#f29a1f" stroke="#fafbfc" stroke-width="0.3"/>
<circle cx="852.25" cy="467.80" r="2.75" fill="#f29a1f" stroke="#fafbfc" stroke-width="0.3"/>
<circle cx="856.98" cy="467.80" r="2.75" fill="#df3b32" stroke="#fafbfc" stroke-width="0.3"/>
<circle cx="861.71" cy="467.80" r="2.75" fill="#f29a1f" stroke="#fafbfc" stroke-width="0.3"/>
<circle cx="866.44" cy="467.80" r="2.75" fill="#f29a1f" stroke="#fafbfc" stroke-width="0.3"/>
<circle cx="871.17" cy="467.80" r="2.75" fill="#f29a1f" stroke="#fafbfc" stroke-width="0.3"/>
<circle cx="875.90" cy="467.80" r="2.75" fill="#17a05d" stroke="#fafbfc" stroke-width="0.3"/>
<circle cx="880.63" cy="467.80" r="2.75" fill="#df3b32" stroke="#fafbfc" stroke-width="0.3"/>
<line x1="186" y1="480.75" x2="960" y2="480.75" stroke="#eceef1" stroke-width="1"/>
<path d="M276.3 490.25 V495.65000000000003" fill="none" stroke="#636569" stroke-width="1.2" stroke-linecap="round"/>
<circle cx="276.3" cy="497.25" r="1.6" fill="none" stroke="#636569" stroke-width="1.1"/>
<circle cx="282.3" cy="491.55" r="1.6" fill="none" stroke="#636569" stroke-width="1.1"/>
<path d="M282.3 493.15000000000003 Q282.3 497.15000000000003 277.90000000000003 497.15000000000003" fill="none" stroke="#636569" stroke-width="1.1"/>
<circle cx="760.6" cy="494.55" r="4.5" fill="none" stroke="#eba03a" stroke-width="1.1"/>
<path d="M758.0 495.35 Q759.0 492.35 760.2 494.75 Q761.4 496.95 763.2 493.55" fill="none" stroke="#eba03a" stroke-width="1" stroke-linecap="round"/>
<circle cx="828.60" cy="494.55" r="2.75" fill="#f29a1f" stroke="#fafbfc" stroke-width="0.3"/>
<circle cx="833.33" cy="494.55" r="2.75" fill="#df3b32" stroke="#fafbfc" stroke-width="0.3"/>
<circle cx="838.06" cy="494.55" r="2.75" fill="#f29a1f" stroke="#fafbfc" stroke-width="0.3"/>
<circle cx="842.79" cy="494.55" r="2.75" fill="#f29a1f" stroke="#fafbfc" stroke-width="0.3"/>
<circle cx="847.52" cy="494.55" r="2.75" fill="#df3b32" stroke="#fafbfc" stroke-width="0.3"/>
<circle cx="852.25" cy="494.55" r="2.75" fill="#f29a1f" stroke="#fafbfc" stroke-width="0.3"/>
<circle cx="856.98" cy="494.55" r="2.75" fill="#df3b32" stroke="#fafbfc" stroke-width="0.3"/>
<circle cx="861.71" cy="494.55" r="2.75" fill="#f29a1f" stroke="#fafbfc" stroke-width="0.3"/>
<circle cx="866.44" cy="494.55" r="2.75" fill="#f29a1f" stroke="#fafbfc" stroke-width="0.3"/>
<circle cx="871.17" cy="494.55" r="2.75" fill="#17a05d" stroke="#fafbfc" stroke-width="0.3"/>
<circle cx="875.90" cy="494.55" r="2.75" fill="#f29a1f" stroke="#fafbfc" stroke-width="0.3"/>
<circle cx="880.63" cy="494.55" r="2.75" fill="#17a05d" stroke="#fafbfc" stroke-width="0.3"/>
<line x1="186" y1="507.50" x2="960" y2="507.50" stroke="#eceef1" stroke-width="1"/>
</svg>
<div class="t" style="left:40.00px;top:8.82px;font-size:8.6px;font-weight:700;color:#2f3134;letter-spacing:-0.25px;-webkit-text-stroke:0;">Acme Inc.</div>
<div class="t" style="left:40.00px;top:19.92px;font-size:8.6px;font-weight:400;color:#6a6c70;">janedoe</div>
<div class="t" style="left:37.60px;top:61.94px;font-size:10px;font-weight:400;color:#555a60;">Merge Protections</div>
<div class="t" style="left:37.60px;top:91.13px;font-size:10px;font-weight:400;color:#555a60;">Merge Queue</div>
<div class="t" style="left:37.60px;top:120.44px;font-size:10px;font-weight:400;color:#555a60;">Workflow Automation</div>
<div class="t" style="left:37.60px;top:149.94px;font-size:10px;font-weight:400;color:#2e3033;-webkit-text-stroke:0.2px #2e3033;">CI Insights</div>
<div class="t" style="left:37.60px;top:175.56px;font-size:9.5px;font-weight:700;color:#2e3033;-webkit-text-stroke:0;">Jobs</div>
<div class="t" style="left:37.60px;top:202.00px;font-size:9.8px;font-weight:400;color:#555a60;">Jobs Executions</div>
<div class="t" style="left:37.60px;top:228.60px;font-size:9.8px;font-weight:400;color:#555a60;">Tests</div>
<div class="t" style="left:37.60px;top:255.20px;font-size:9.8px;font-weight:400;color:#555a60;">Issues</div>
<div class="t" style="left:37.60px;top:289.14px;font-size:10px;font-weight:400;color:#555a60;">Command Restrictions</div>
<div class="t" style="left:37.60px;top:318.44px;font-size:10px;font-weight:400;color:#555a60;">Config Editor</div>
<div class="t" style="left:37.60px;top:347.74px;font-size:10px;font-weight:400;color:#555a60;">Event Logs</div>
<div class="t" style="left:37.60px;top:376.94px;font-size:10px;font-weight:400;color:#555a60;">Integrations</div>
<div class="t" style="left:43.00px;top:556.83px;font-size:10px;font-weight:400;color:#555a60;">Help Center</div>
<div class="t" style="left:225.60px;top:13.96px;font-size:10.8px;font-weight:700;color:#2c2e31;-webkit-text-stroke:0;">Jobs</div>
<div class="t" style="left:786.60px;top:13.54px;font-size:10px;font-weight:400;color:#3f4246;letter-spacing:-0.1px;-webkit-text-stroke:0.4px #3f4246;">Jan 6, 09:00 – Jan 13, 17:00</div>
<div class="t" style="left:214.80px;top:47.70px;font-size:9.8px;font-weight:400;color:#686b6f;-webkit-text-stroke:0.45px #686b6f;">Filter</div>
<div class="t" style="left:214.80px;top:81.24px;font-size:9.4px;font-weight:700;color:#2e3033;-webkit-text-stroke:0;">Performance Summary</div>
<div class="t" style="left:211.00px;top:111.94px;font-size:8.1px;font-weight:700;color:#2e3033;-webkit-text-stroke:0;">Total Duration</div>
<div class="t" style="left:401.00px;top:111.94px;font-size:8.1px;font-weight:700;color:#2e3033;-webkit-text-stroke:0;">Median duration</div>
<div class="t" style="left:590.00px;top:111.94px;font-size:8.1px;font-weight:700;color:#2e3033;-webkit-text-stroke:0;">Total Executions</div>
<div class="t" style="left:779.00px;top:111.94px;font-size:8.1px;font-weight:700;color:#2e3033;-webkit-text-stroke:0;">Total Failures</div>
<div class="t" style="left:168px;width:47.5px;text-align:right;top:133.36px;font-size:8.2px;color:#9a9da1;">2</div>
<div class="t" style="left:168px;width:47.5px;text-align:right;top:164.86px;font-size:8.2px;color:#9a9da1;">1</div>
<div class="t" style="left:168px;width:47.5px;text-align:right;top:196.96px;font-size:8.2px;color:#9a9da1;">0</div>
<div class="t" style="left:225px;width:40px;text-align:center;top:205.77px;font-size:8.3px;color:#9a9da1;">Nov 2</div>
<div class="t" style="left:255px;width:40px;text-align:center;top:205.77px;font-size:8.3px;color:#9a9da1;">Nov 3</div>
<div class="t" style="left:285px;width:40px;text-align:center;top:205.77px;font-size:8.3px;color:#9a9da1;">Nov 4</div>
<div class="t" style="left:315px;width:40px;text-align:center;top:205.77px;font-size:8.3px;color:#9a9da1;">Nov 5</div>
<div class="t" style="left:358px;width:47.5px;text-align:right;top:133.36px;font-size:8.2px;color:#9a9da1;">10</div>
<div class="t" style="left:358px;width:47.5px;text-align:right;top:164.86px;font-size:8.2px;color:#9a9da1;">5</div>
<div class="t" style="left:358px;width:47.5px;text-align:right;top:196.96px;font-size:8.2px;color:#9a9da1;">0</div>
<div class="t" style="left:415px;width:40px;text-align:center;top:205.77px;font-size:8.3px;color:#9a9da1;">Nov 2</div>
<div class="t" style="left:445px;width:40px;text-align:center;top:205.77px;font-size:8.3px;color:#9a9da1;">Nov 3</div>
<div class="t" style="left:475px;width:40px;text-align:center;top:205.77px;font-size:8.3px;color:#9a9da1;">Nov 4</div>
<div class="t" style="left:505px;width:40px;text-align:center;top:205.77px;font-size:8.3px;color:#9a9da1;">Nov 5</div>
<div class="t" style="left:547px;width:47.5px;text-align:right;top:133.36px;font-size:8.2px;color:#9a9da1;">100</div>
<div class="t" style="left:547px;width:47.5px;text-align:right;top:164.86px;font-size:8.2px;color:#9a9da1;">50</div>
<div class="t" style="left:547px;width:47.5px;text-align:right;top:196.96px;font-size:8.2px;color:#9a9da1;">0</div>
<div class="t" style="left:604px;width:40px;text-align:center;top:205.77px;font-size:8.3px;color:#9a9da1;">Nov 2</div>
<div class="t" style="left:634px;width:40px;text-align:center;top:205.77px;font-size:8.3px;color:#9a9da1;">Nov 3</div>
<div class="t" style="left:664px;width:40px;text-align:center;top:205.77px;font-size:8.3px;color:#9a9da1;">Nov 4</div>
<div class="t" style="left:694px;width:40px;text-align:center;top:205.77px;font-size:8.3px;color:#9a9da1;">Nov 5</div>
<div class="t" style="left:736px;width:47.5px;text-align:right;top:133.36px;font-size:8.2px;color:#9a9da1;">40</div>
<div class="t" style="left:736px;width:47.5px;text-align:right;top:164.86px;font-size:8.2px;color:#9a9da1;">20</div>
<div class="t" style="left:736px;width:47.5px;text-align:right;top:196.96px;font-size:8.2px;color:#9a9da1;">0</div>
<div class="t" style="left:793px;width:40px;text-align:center;top:205.77px;font-size:8.3px;color:#9a9da1;">Nov 2</div>
<div class="t" style="left:823px;width:40px;text-align:center;top:205.77px;font-size:8.3px;color:#9a9da1;">Nov 3</div>
<div class="t" style="left:853px;width:40px;text-align:center;top:205.77px;font-size:8.3px;color:#9a9da1;">Nov 4</div>
<div class="t" style="left:883px;width:40px;text-align:center;top:205.77px;font-size:8.3px;color:#9a9da1;">Nov 5</div>
<div class="t" style="left:197.50px;top:248.86px;font-size:8.2px;font-weight:700;color:#2e3033;-webkit-text-stroke:0;">8 jobs</div>
<div class="t" style="left:197.50px;top:278.06px;font-size:8.2px;font-weight:700;color:#2e3033;-webkit-text-stroke:0;">Job Name</div>
<div class="t" style="left:274.00px;top:278.06px;font-size:8.2px;font-weight:700;color:#2e3033;-webkit-text-stroke:0;">Branch</div>
<div class="t" style="left:340.50px;top:278.06px;font-size:8.2px;font-weight:700;color:#2e3033;-webkit-text-stroke:0;">Repository</div>
<div class="t" style="left:404.00px;top:278.06px;font-size:8.2px;font-weight:700;color:#2e3033;-webkit-text-stroke:0;">Pipeline</div>
<div class="t" style="left:478.80px;top:278.06px;font-size:8.2px;font-weight:700;color:#2e3033;-webkit-text-stroke:0;">Executions</div>
<div class="t" style="left:543.50px;top:278.06px;font-size:8.2px;font-weight:700;color:#2e3033;-webkit-text-stroke:0;">Failures</div>
<div class="t" style="left:595.50px;top:278.06px;font-size:8.2px;font-weight:700;color:#2e3033;-webkit-text-stroke:0;">Median duration</div>
<div class="t" style="left:680.00px;top:278.06px;font-size:8.2px;font-weight:700;color:#2e3033;-webkit-text-stroke:0;">Total duration</div>
<div class="t" style="left:755.50px;top:278.06px;font-size:8.2px;font-weight:700;color:#2e3033;-webkit-text-stroke:0;">Health</div>
<div class="t" style="left:826.00px;top:278.06px;font-size:8.2px;font-weight:700;color:#2e3033;-webkit-text-stroke:0;">Health trend</div>
<div class="t" style="left:909.50px;top:278.06px;font-size:8.2px;font-weight:700;color:#2e3033;-webkit-text-stroke:0;">Last run</div>
<div class="t" style="left:197.50px;top:303.04px;font-size:10px;font-weight:400;color:#74777b;">mypy_cache</div>
<div class="t" style="left:287.80px;top:303.04px;font-size:10px;font-weight:400;color:#74777b;">main</div>
<div class="t" style="left:340.50px;top:303.04px;font-size:10px;font-weight:400;color:#74777b;">main</div>
<div class="t" style="left:404.00px;top:303.04px;font-size:10px;font-weight:400;color:#74777b;">deployment</div>
<div class="t" style="left:478.80px;top:303.04px;font-size:10px;font-weight:400;color:#46494d;letter-spacing:-0.2px;">109</div>
<div class="t" style="left:543.50px;top:303.04px;font-size:10px;font-weight:400;color:#4f5256;letter-spacing:-0.6px;">10%</div>
<div class="t" style="left:595.50px;top:303.04px;font-size:10px;font-weight:400;color:#46494d;letter-spacing:-0.25px;">9m 31s</div>
<div class="t" style="left:680.00px;top:303.04px;font-size:10px;font-weight:400;color:#46494d;letter-spacing:-0.25px;">9m 31s</div>
<div class="t" style="left:770.30px;top:303.04px;font-size:10px;font-weight:400;color:#46494d;">Healthy</div>
<div class="t" style="left:909.50px;top:303.04px;font-size:10px;font-weight:400;color:#46494d;">33m ago</div>
<div class="t" style="left:197.50px;top:329.79px;font-size:10px;font-weight:400;color:#74777b;">docker-sa…</div>
<div class="t" style="left:287.80px;top:329.79px;font-size:10px;font-weight:400;color:#74777b;">main</div>
<div class="t" style="left:340.50px;top:329.79px;font-size:10px;font-weight:400;color:#74777b;">engine</div>
<div class="t" style="left:404.00px;top:329.79px;font-size:10px;font-weight:400;color:#74777b;">deployment</div>
<div class="t" style="left:478.80px;top:329.79px;font-size:10px;font-weight:400;color:#46494d;letter-spacing:-0.2px;">110</div>
<div class="t" style="left:543.50px;top:329.79px;font-size:10px;font-weight:400;color:#4f5256;letter-spacing:-0.6px;">33%</div>
<div class="t" style="left:595.50px;top:329.79px;font-size:10px;font-weight:400;color:#46494d;letter-spacing:-0.25px;">9m 31s</div>
<div class="t" style="left:680.00px;top:329.79px;font-size:10px;font-weight:400;color:#46494d;letter-spacing:-0.25px;">9m 31s</div>
<div class="t" style="left:770.30px;top:329.79px;font-size:10px;font-weight:400;color:#46494d;">Healthy</div>
<div class="t" style="left:909.50px;top:329.79px;font-size:10px;font-weight:400;color:#46494d;">45m ago</div>
<div class="t" style="left:197.50px;top:356.54px;font-size:10px;font-weight:400;color:#74777b;">docker-lint</div>
<div class="t" style="left:287.80px;top:356.54px;font-size:10px;font-weight:400;color:#74777b;">main</div>
<div class="t" style="left:340.50px;top:356.54px;font-size:10px;font-weight:400;color:#74777b;">engine</div>
<div class="t" style="left:404.00px;top:356.54px;font-size:10px;font-weight:400;color:#74777b;">checks</div>
<div class="t" style="left:478.80px;top:356.54px;font-size:10px;font-weight:400;color:#46494d;letter-spacing:-0.2px;">110</div>
<div class="t" style="left:543.50px;top:356.54px;font-size:10px;font-weight:400;color:#4f5256;letter-spacing:-0.6px;">20%</div>
<div class="t" style="left:595.50px;top:356.54px;font-size:10px;font-weight:400;color:#46494d;letter-spacing:-0.25px;">1m 31s</div>
<div class="t" style="left:680.00px;top:356.54px;font-size:10px;font-weight:400;color:#46494d;letter-spacing:-0.25px;">1m 31s</div>
<div class="t" style="left:770.30px;top:356.54px;font-size:10px;font-weight:400;color:#46494d;">Healthy</div>
<div class="t" style="left:909.50px;top:356.54px;font-size:10px;font-weight:400;color:#46494d;">4h ago</div>
<div class="t" style="left:197.50px;top:383.29px;font-size:10px;font-weight:400;color:#74777b;">deploy</div>
<div class="t" style="left:287.80px;top:383.29px;font-size:10px;font-weight:400;color:#74777b;">main</div>
<div class="t" style="left:340.50px;top:383.29px;font-size:10px;font-weight:400;color:#74777b;">engine</div>
<div class="t" style="left:404.00px;top:383.29px;font-size:10px;font-weight:400;color:#74777b;">checks</div>
<div class="t" style="left:478.80px;top:383.29px;font-size:10px;font-weight:400;color:#46494d;letter-spacing:-0.2px;">42</div>
<div class="t" style="left:543.50px;top:383.29px;font-size:10px;font-weight:400;color:#4f5256;letter-spacing:-0.6px;">10%</div>
<div class="t" style="left:595.50px;top:383.29px;font-size:10px;font-weight:400;color:#46494d;letter-spacing:-0.25px;">1m 31s</div>
<div class="t" style="left:680.00px;top:383.29px;font-size:10px;font-weight:400;color:#46494d;letter-spacing:-0.25px;">1m 31s</div>
<div class="t" style="left:770.30px;top:383.29px;font-size:10px;font-weight:400;color:#46494d;">Healthy</div>
<div class="t" style="left:909.50px;top:383.29px;font-size:10px;font-weight:400;color:#46494d;">4h ago</div>
<div class="t" style="left:197.50px;top:410.04px;font-size:10px;font-weight:400;color:#74777b;">Dependabot</div>
<div class="t" style="left:287.80px;top:410.04px;font-size:10px;font-weight:400;color:#74777b;">main</div>
<div class="t" style="left:340.50px;top:410.04px;font-size:10px;font-weight:400;color:#74777b;">main</div>
<div class="t" style="left:404.00px;top:410.04px;font-size:10px;font-weight:400;color:#74777b;">deployment</div>
<div class="t" style="left:478.80px;top:410.04px;font-size:10px;font-weight:400;color:#46494d;letter-spacing:-0.2px;">37</div>
<div class="t" style="left:543.50px;top:410.04px;font-size:10px;font-weight:400;color:#4f5256;letter-spacing:-0.6px;">11%</div>
<div class="t" style="left:595.50px;top:410.04px;font-size:10px;font-weight:400;color:#46494d;letter-spacing:-0.25px;">1m 31s</div>
<div class="t" style="left:680.00px;top:410.04px;font-size:10px;font-weight:400;color:#46494d;letter-spacing:-0.25px;">1m 31s</div>
<div class="t" style="left:770.30px;top:410.04px;font-size:10px;font-weight:400;color:#46494d;">Broken</div>
<div class="t" style="left:909.50px;top:410.04px;font-size:10px;font-weight:400;color:#46494d;">8h ago</div>
<div class="t" style="left:197.50px;top:436.79px;font-size:10px;font-weight:400;color:#74777b;">Dependabot</div>
<div class="t" style="left:287.80px;top:436.79px;font-size:10px;font-weight:400;color:#74777b;">main</div>
<div class="t" style="left:340.50px;top:436.79px;font-size:10px;font-weight:400;color:#74777b;">engine</div>
<div class="t" style="left:404.00px;top:436.79px;font-size:10px;font-weight:400;color:#74777b;">checks</div>
<div class="t" style="left:478.80px;top:436.79px;font-size:10px;font-weight:400;color:#46494d;letter-spacing:-0.2px;">7</div>
<div class="t" style="left:543.50px;top:436.79px;font-size:10px;font-weight:400;color:#4f5256;letter-spacing:-0.6px;">0%</div>
<div class="t" style="left:595.50px;top:436.79px;font-size:10px;font-weight:400;color:#46494d;letter-spacing:-0.25px;">3m 31s</div>
<div class="t" style="left:680.00px;top:436.79px;font-size:10px;font-weight:400;color:#46494d;letter-spacing:-0.25px;">3m 31s</div>
<div class="t" style="left:770.30px;top:436.79px;font-size:10px;font-weight:400;color:#46494d;">Healthy</div>
<div class="t" style="left:909.50px;top:436.79px;font-size:10px;font-weight:400;color:#46494d;">12h ago</div>
<div class="t" style="left:197.50px;top:463.54px;font-size:10px;font-weight:400;color:#74777b;">linters</div>
<div class="t" style="left:287.80px;top:463.54px;font-size:10px;font-weight:400;color:#74777b;">main</div>
<div class="t" style="left:340.50px;top:463.54px;font-size:10px;font-weight:400;color:#74777b;">engine</div>
<div class="t" style="left:404.00px;top:463.54px;font-size:10px;font-weight:400;color:#74777b;">deployment</div>
<div class="t" style="left:478.80px;top:463.54px;font-size:10px;font-weight:400;color:#46494d;letter-spacing:-0.2px;">5</div>
<div class="t" style="left:543.50px;top:463.54px;font-size:10px;font-weight:400;color:#4f5256;letter-spacing:-0.6px;">0%</div>
<div class="t" style="left:595.50px;top:463.54px;font-size:10px;font-weight:400;color:#46494d;letter-spacing:-0.25px;">1m 31s</div>
<div class="t" style="left:680.00px;top:463.54px;font-size:10px;font-weight:400;color:#46494d;letter-spacing:-0.25px;">1m 31s</div>
<div class="t" style="left:770.30px;top:463.54px;font-size:10px;font-weight:400;color:#46494d;">Flaky</div>
<div class="t" style="left:909.50px;top:463.54px;font-size:10px;font-weight:400;color:#46494d;">12h ago</div>
<div class="t" style="left:197.50px;top:490.29px;font-size:10px;font-weight:400;color:#74777b;">semgrep</div>
<div class="t" style="left:287.80px;top:490.29px;font-size:10px;font-weight:400;color:#74777b;">main</div>
<div class="t" style="left:340.50px;top:490.29px;font-size:10px;font-weight:400;color:#74777b;">engine</div>
<div class="t" style="left:404.00px;top:490.29px;font-size:10px;font-weight:400;color:#74777b;">checks</div>
<div class="t" style="left:478.80px;top:490.29px;font-size:10px;font-weight:400;color:#46494d;letter-spacing:-0.2px;">2</div>
<div class="t" style="left:543.50px;top:490.29px;font-size:10px;font-weight:400;color:#4f5256;letter-spacing:-0.6px;">0%</div>
<div class="t" style="left:595.50px;top:490.29px;font-size:10px;font-weight:400;color:#46494d;letter-spacing:-0.25px;">1m 31s</div>
<div class="t" style="left:680.00px;top:490.29px;font-size:10px;font-weight:400;color:#46494d;letter-spacing:-0.25px;">1m 31s</div>
<div class="t" style="left:770.30px;top:490.29px;font-size:10px;font-weight:400;color:#46494d;">Flaky</div>
<div class="t" style="left:909.50px;top:490.29px;font-size:10px;font-weight:400;color:#46494d;">12h ago</div>
</body></html>
